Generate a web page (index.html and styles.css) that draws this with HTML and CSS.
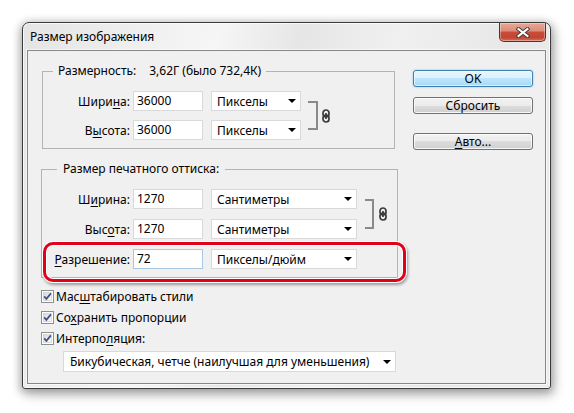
FILE: index.html
```html
<!DOCTYPE html>
<html lang="ru">
<head>
<meta charset="utf-8">
<title>Размер изображения</title>
<link rel="stylesheet" href="styles.css">
</head>
<body>
<div class="window">
  <div class="titlebar">
    <span class="title">Размер изображения</span>
    <button class="close" aria-label="Закрыть">
      <svg width="14" height="11" viewBox="0 0 14 11">
        <path d="M2.5 2 L11.5 9 M11.5 2 L2.5 9" stroke="#3c3c3c" stroke-width="4" stroke-linecap="square" fill="none"/>
        <path d="M2.5 2 L11.5 9 M11.5 2 L2.5 9" stroke="#ffffff" stroke-width="2" stroke-linecap="square" fill="none"/>
      </svg>
    </button>
  </div>
  <div class="client">
    <div class="main">
      <fieldset class="group g1">
        <legend class="legend1"><span>Размерность:</span><span class="val">3,62Г (было 732,4К)</span></legend>
        <div class="fields">
          <div class="rows rows1">
            <div class="row">
              <span class="label l1">Шири<u>н</u>а:</span>
              <span class="input">36000</span>
              <span class="select s1"><span>Пикселы</span><i class="arrow"></i></span>
            </div>
            <div class="row">
              <span class="label l1">В<u>ы</u>сота:</span>
              <span class="input">36000</span>
              <span class="select s1"><span>Пикселы</span><i class="arrow"></i></span>
            </div>
          </div>
          <div class="link link1">
            <span class="bracket b1"></span>
            <svg class="chain" width="8" height="14" viewBox="0 0 8 14">
              <rect x="1" y="1" width="6" height="7" rx="3" fill="none" stroke="#3a3a3a" stroke-width="1.7"/>
              <rect x="1" y="6" width="6" height="7" rx="3" fill="none" stroke="#3a3a3a" stroke-width="1.7"/>
              <line x1="4" y1="4" x2="4" y2="10" stroke="#3a3a3a" stroke-width="1.7"/>
            </svg>
          </div>
        </div>
      </fieldset>

      <fieldset class="group g2">
        <legend class="legend2">Размер печатного оттиска:</legend>
        <div class="fields">
          <div class="rows rows2">
            <div class="row">
              <span class="label l2">Ш<u>и</u>рина:</span>
              <span class="input">1270</span>
              <span class="select s2"><span>Сантиметры</span><i class="arrow"></i></span>
            </div>
            <div class="row">
              <span class="label l2">Выс<u>о</u>та:</span>
              <span class="input">1270</span>
              <span class="select s2"><span>Сантиметры</span><i class="arrow"></i></span>
            </div>
          </div>
          <div class="link link2">
            <span class="bracket b2"></span>
            <svg class="chain" width="8" height="14" viewBox="0 0 8 14">
              <rect x="1" y="1" width="6" height="7" rx="3" fill="none" stroke="#3a3a3a" stroke-width="1.7"/>
              <rect x="1" y="6" width="6" height="7" rx="3" fill="none" stroke="#3a3a3a" stroke-width="1.7"/>
              <line x1="4" y1="4" x2="4" y2="10" stroke="#3a3a3a" stroke-width="1.7"/>
            </svg>
          </div>
        </div>
        <div class="row res">
          <span class="label l2"><u>Р</u>азрешение:</span>
          <span class="input focus">72</span>
          <span class="select s2"><span>Пикселы/дюйм</span><i class="arrow"></i></span>
        </div>
      </fieldset>

      <div class="checks">
        <div class="check">
          <svg width="13" height="13" viewBox="0 0 13 13"><defs><linearGradient id="cbg" x1="0" y1="0" x2="1" y2="1"><stop offset="0" stop-color="#d8d8d8"/><stop offset="1" stop-color="#fbfbfb"/></linearGradient></defs><rect x="0.5" y="0.5" width="12" height="12" fill="#fff" stroke="#8e8f8f"/><rect x="2.5" y="2.5" width="8" height="8" fill="url(#cbg)" stroke="#c6c6c6" stroke-width="0.6"/><path d="M3.2 6.4 L5.4 8.9 L9.9 3.4" fill="none" stroke="#3e5187" stroke-width="1.7"/></svg>
          <span>Мас<u>ш</u>табировать стили</span>
        </div>
        <div class="check">
          <svg width="13" height="13" viewBox="0 0 13 13"><rect x="0.5" y="0.5" width="12" height="12" fill="#fff" stroke="#8e8f8f"/><rect x="2.5" y="2.5" width="8" height="8" fill="url(#cbg)" stroke="#c6c6c6" stroke-width="0.6"/><path d="M3.2 6.4 L5.4 8.9 L9.9 3.4" fill="none" stroke="#3e5187" stroke-width="1.7"/></svg>
          <span>Со<u>х</u>ранить пропорции</span>
        </div>
        <div class="check">
          <svg width="13" height="13" viewBox="0 0 13 13"><rect x="0.5" y="0.5" width="12" height="12" fill="#fff" stroke="#8e8f8f"/><rect x="2.5" y="2.5" width="8" height="8" fill="url(#cbg)" stroke="#c6c6c6" stroke-width="0.6"/><path d="M3.2 6.4 L5.4 8.9 L9.9 3.4" fill="none" stroke="#3e5187" stroke-width="1.7"/></svg>
          <span>Интерпо<u>л</u>яция:</span>
        </div>
      </div>

      <span class="select interp"><span>Бикубическая, четче (наилучшая для уменьшения)</span><i class="arrow"></i></span>
    </div>

    <div class="buttons">
      <button class="btn default">OK</button>
      <button class="btn">Сбросить</button>
      <button class="btn auto"><u>А</u>вто...</button>
    </div>
  </div>
</div>
</body>
</html>
```

FILE: styles.css
```css
* { box-sizing: border-box; }
html, body { margin: 0; padding: 0; }
body {
  width: 574px;
  height: 413px;
  overflow: hidden;
  background: #ffffff;
  font-family: "Noto Sans", "Segoe UI", sans-serif;
  font-size: 12px;
  color: #000;
}
u { text-underline-offset: 2px; }

.window {
  margin: 22px 0 0 22px;
  width: 529px;
  height: 367px;
  border: 1px solid #3b3b3b;
  border-radius: 7px 7px 3px 3px;
  background: linear-gradient(103deg, #e4e4e4 0%, #eeeeee 18%, #f6f6f6 32%, #e6e6e6 46%, #f0f0f0 62%, #e8e8e8 80%, #ececec 100%);
  box-shadow: inset 0 0 0 1px rgba(255,255,255,0.7), 0 2px 9px 2px rgba(0,0,0,0.28), 3px 6px 14px rgba(0,0,0,0.18);
  padding: 0 4px 4px 4px;
  display: flex;
  flex-direction: column;
}

.titlebar {
  height: 27px;
  display: flex;
  justify-content: space-between;
  align-items: flex-start;
}
.title {
  padding: 6px 0 0 3px;
  line-height: 16px;
  color: #000;
}
.close {
  width: 47px;
  height: 19px;
  margin: 0;
  padding: 0;
  border: 1px solid #6a2a20;
  border-top: 0;
  border-radius: 0 0 5px 5px;
  background: linear-gradient(#e8a897 0%, #dc8b78 45%, #c94f3b 50%, #c24431 80%, #d5705c 100%);
  box-shadow: inset 0 0 0 1px rgba(255,255,255,0.35);
  display: flex;
  align-items: center;
  justify-content: center;
}

.client {
  flex: 1;
  border: 1px solid #878787;
  background: #f0f0f0;
  display: flex;
  box-shadow: 0 0 0 1px rgba(255,255,255,0.6);
}

.main {
  width: 385px;
  padding: 12px 0 0 13px;
  display: flex;
  flex-direction: column;
  align-items: flex-start;
}

.group {
  margin: 0;
  padding: 12px 0 8px 0;
  border: 1px solid #b4b4b4;
  min-width: 0;
}
.g1 { width: 353px; margin-left: 1px; }
.g2 { width: 357px; margin-top: 12px; }

legend {
  line-height: 16px;
  padding: 0 5px;
}
.legend1 { margin-left: 10px; }
.legend1 .val { margin-left: 13px; }
.legend2 { margin-left: 15px; padding: 0 6px; }

.fields {
  display: flex;
  align-items: center;
}
.rows { display: flex; flex-direction: column; }
.rows1 { gap: 9px; }
.rows2 { gap: 10px; }

.row {
  height: 20px;
  display: flex;
  align-items: center;
}
.label {
  text-align: right;
  padding-right: 3px;
  white-space: nowrap;
}
.l1 { width: 90px; }
.l2 { width: 91px; }

.input {
  width: 70px;
  height: 20px;
  border: 1px solid #d9d9d9;
  background: #fff;
  padding-left: 3px;
  line-height: 18px;
}
.input.focus { border-color: #a9c6e4; }

.select {
  height: 20px;
  margin-left: 8px;
  border: 1px solid #d9d9d9;
  background: #fff;
  padding: 0 4px 0 5px;
  display: flex;
  align-items: center;
  justify-content: space-between;
  white-space: nowrap;
}
.s1 { width: 90px; }
.s2 { width: 146px; }
.arrow {
  width: 0;
  height: 0;
  border-left: 4px solid transparent;
  border-right: 4px solid transparent;
  border-top: 4px solid #000;
}

.link { display: flex; align-items: center; }
.link1 { margin-left: 7px; }
.link2 { margin-left: 8px; }
.bracket {
  border: 2px solid #8a8a8a;
  border-left: 0;
}
.b1 { width: 10px; height: 29px; }
.b2 { width: 9px; height: 30px; }
.link1 .chain { margin-left: 4px; }
.link2 .chain { margin-left: 5px; }

.res {
  margin-top: 10px;
  position: relative;
}
.res::after {
  content: "";
  position: absolute;
  left: 1px;
  top: -7px;
  width: 357px;
  height: 34px;
  border: 3px solid #e1001a;
  border-radius: 10px;
  box-shadow: 0 0 0 1px #ffffff, inset 0 0 0 1px #ffffff, 1px 2px 3px 1px rgba(0,0,0,0.35);
  pointer-events: none;
}

.checks {
  margin-top: 8px;
  display: flex;
  flex-direction: column;
}
.check {
  height: 21px;
  display: flex;
  align-items: center;
}
.check svg { flex: none; }
.check span { margin-left: 2px; }

.interp {
  width: 333px;
  height: 21px;
  margin-left: 22px;
  margin-top: 2px;
  padding: 0 4px 0 6px;
}

.buttons {
  width: 120px;
  padding-top: 19px;
  display: flex;
  flex-direction: column;
}
.btn {
  height: 17px;
  margin: 0;
  padding: 0;
  font-family: inherit;
  font-size: 12px;
  line-height: 15px;
  color: #000;
  border: 1px solid #707070;
  border-radius: 3px;
  background: linear-gradient(#f2f2f2 0%, #ebebeb 50%, #dddddd 50%, #cfcfcf 100%);
  box-shadow: inset 0 0 0 1px rgba(255,255,255,0.8);
}
.btn + .btn { margin-top: 10px; }
.btn.auto { margin-top: 19px; }
.btn.default {
  border-color: #3c7fb1;
  background: linear-gradient(#eaf6fd 0%, #d9f0fc 50%, #bee6fd 50%, #a7d9f5 100%);
  box-shadow: inset 0 0 0 1px rgba(255,255,255,0.6), 0 0 2px #63c6f2;
}
```
